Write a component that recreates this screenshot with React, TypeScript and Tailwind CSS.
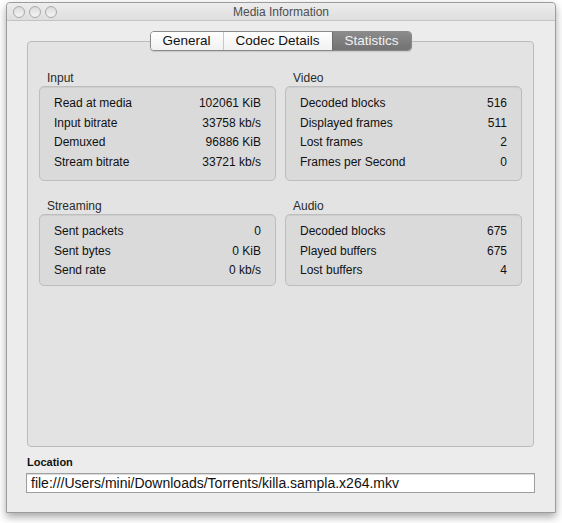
import React from "react";

type Row = { label: string; value: string };

const groups: { title: string; rows: Row[]; h: string }[][] = [
  [
    {
      title: "Input",
      h: "h-[95px]",
      rows: [
        { label: "Read at media", value: "102061 KiB" },
        { label: "Input bitrate", value: "33758 kb/s" },
        { label: "Demuxed", value: "96886 KiB" },
        { label: "Stream bitrate", value: "33721 kb/s" },
      ],
    },
    {
      title: "Video",
      h: "h-[95px]",
      rows: [
        { label: "Decoded blocks", value: "516" },
        { label: "Displayed frames", value: "511" },
        { label: "Lost frames", value: "2" },
        { label: "Frames per Second", value: "0" },
      ],
    },
  ],
  [
    {
      title: "Streaming",
      h: "h-[72px]",
      rows: [
        { label: "Sent packets", value: "0" },
        { label: "Sent bytes", value: "0 KiB" },
        { label: "Send rate", value: "0 kb/s" },
      ],
    },
    {
      title: "Audio",
      h: "h-[72px]",
      rows: [
        { label: "Decoded blocks", value: "675" },
        { label: "Played buffers", value: "675" },
        { label: "Lost buffers", value: "4" },
      ],
    },
  ],
];

const StatBox: React.FC<{ title: string; rows: Row[]; h: string }> = ({ title, rows, h }) => (
  <div className="flex flex-col">
    <div className="ml-[8px] h-[13px] mb-[1px] text-[12px] leading-[13px] text-[#2a2a2a]">{title}</div>
    <div
      className={`${h} rounded-[5px] border border-[#bdbdbd] bg-[#dadada] pt-[6px] pl-[14px] pr-[14px] shadow-[inset_0_1px_1px_rgba(0,0,0,0.06)]`}
    >
      {rows.map((r) => (
        <div key={r.label} className="flex h-[19.7px] items-center justify-between text-[12px] text-[#111]">
          <span>{r.label}</span>
          <span>{r.value}</span>
        </div>
      ))}
    </div>
  </div>
);

const App: React.FC = () => {
  return (
    <div
      className="w-[562px] h-[523px] bg-white pt-[2px] pl-[6px]"
      style={{ fontFamily: '"Liberation Sans", Arial, sans-serif' }}
    >
      <div className="flex h-[511px] w-[550px] flex-col rounded-t-[4px] border border-[#9c9c9c] bg-[#ececec] shadow-[0_4px_8px_rgba(0,0,0,0.35)]">
        {/* title bar */}
        <div className="grid h-[18px] grid-cols-[1fr_auto_1fr] items-center rounded-t-[4px] border-b border-[#c4c4c4] bg-gradient-to-b from-[#ededed] to-[#dedede]">
          <div className="flex items-center gap-[4px] pl-[6px]">
            {[0, 1, 2].map((i) => (
              <span
                key={i}
                className="h-[12px] w-[12px] rounded-full border border-[#a8a8a8] bg-gradient-to-b from-[#dcdcdc] to-[#f4f4f4]"
              />
            ))}
          </div>
          <div className="text-[12px] text-[#4e4e4e]">Media Information</div>
          <div />
        </div>

        {/* tab panel */}
        <div className="ml-[20px] mt-[20px] flex h-[406px] w-[507px] flex-col rounded-[4px] border border-[#bcbcbc] bg-[#e3e3e3]">
          <div className="-mt-[11px] flex h-[20px] self-center overflow-hidden rounded-[4px] border border-[#8a8a8a] text-[13.5px] shadow-[0_1px_1px_rgba(0,0,0,0.12)]">
            <div className="flex w-[72px] items-center justify-center bg-gradient-to-b from-white to-[#f1f1f1] text-[#111]">
              General
            </div>
            <div className="flex w-[109px] items-center justify-center border-l border-[#c8c8c8] bg-gradient-to-b from-white to-[#f1f1f1] text-[#111]">
              Codec Details
            </div>
            <div className="flex w-[79px] items-center justify-center border-l border-[#6c6c6c] bg-gradient-to-b from-[#8b8b8b] to-[#727272] text-[#f2f2f2]">
              Statistics
            </div>
          </div>

          {groups.map((pair, i) => (
            <div
              key={i}
              className={`grid grid-cols-[237px_237px] gap-x-[9px] px-[11px] ${i === 0 ? "mt-[21px]" : "mt-[19px]"}`}
            >
              {pair.map((g) => (
                <StatBox key={g.title} title={g.title} rows={g.rows} h={g.h} />
              ))}
            </div>
          ))}
        </div>

        {/* location */}
        <div className="ml-[20px] mt-[9px] h-[13px] text-[11px] font-bold leading-[13px] text-[#111]">Location</div>
        <div className="ml-[19px] mt-[4px] flex h-[20px] w-[509px] items-center border border-[#9f9f9f] bg-white pl-[4px] text-[14px] text-[#111] shadow-[inset_0_1px_1px_rgba(0,0,0,0.15)]">
          file:///Users/mini/Downloads/Torrents/killa.sampla.x264.mkv
        </div>
      </div>
    </div>
  );
};

export default App;
